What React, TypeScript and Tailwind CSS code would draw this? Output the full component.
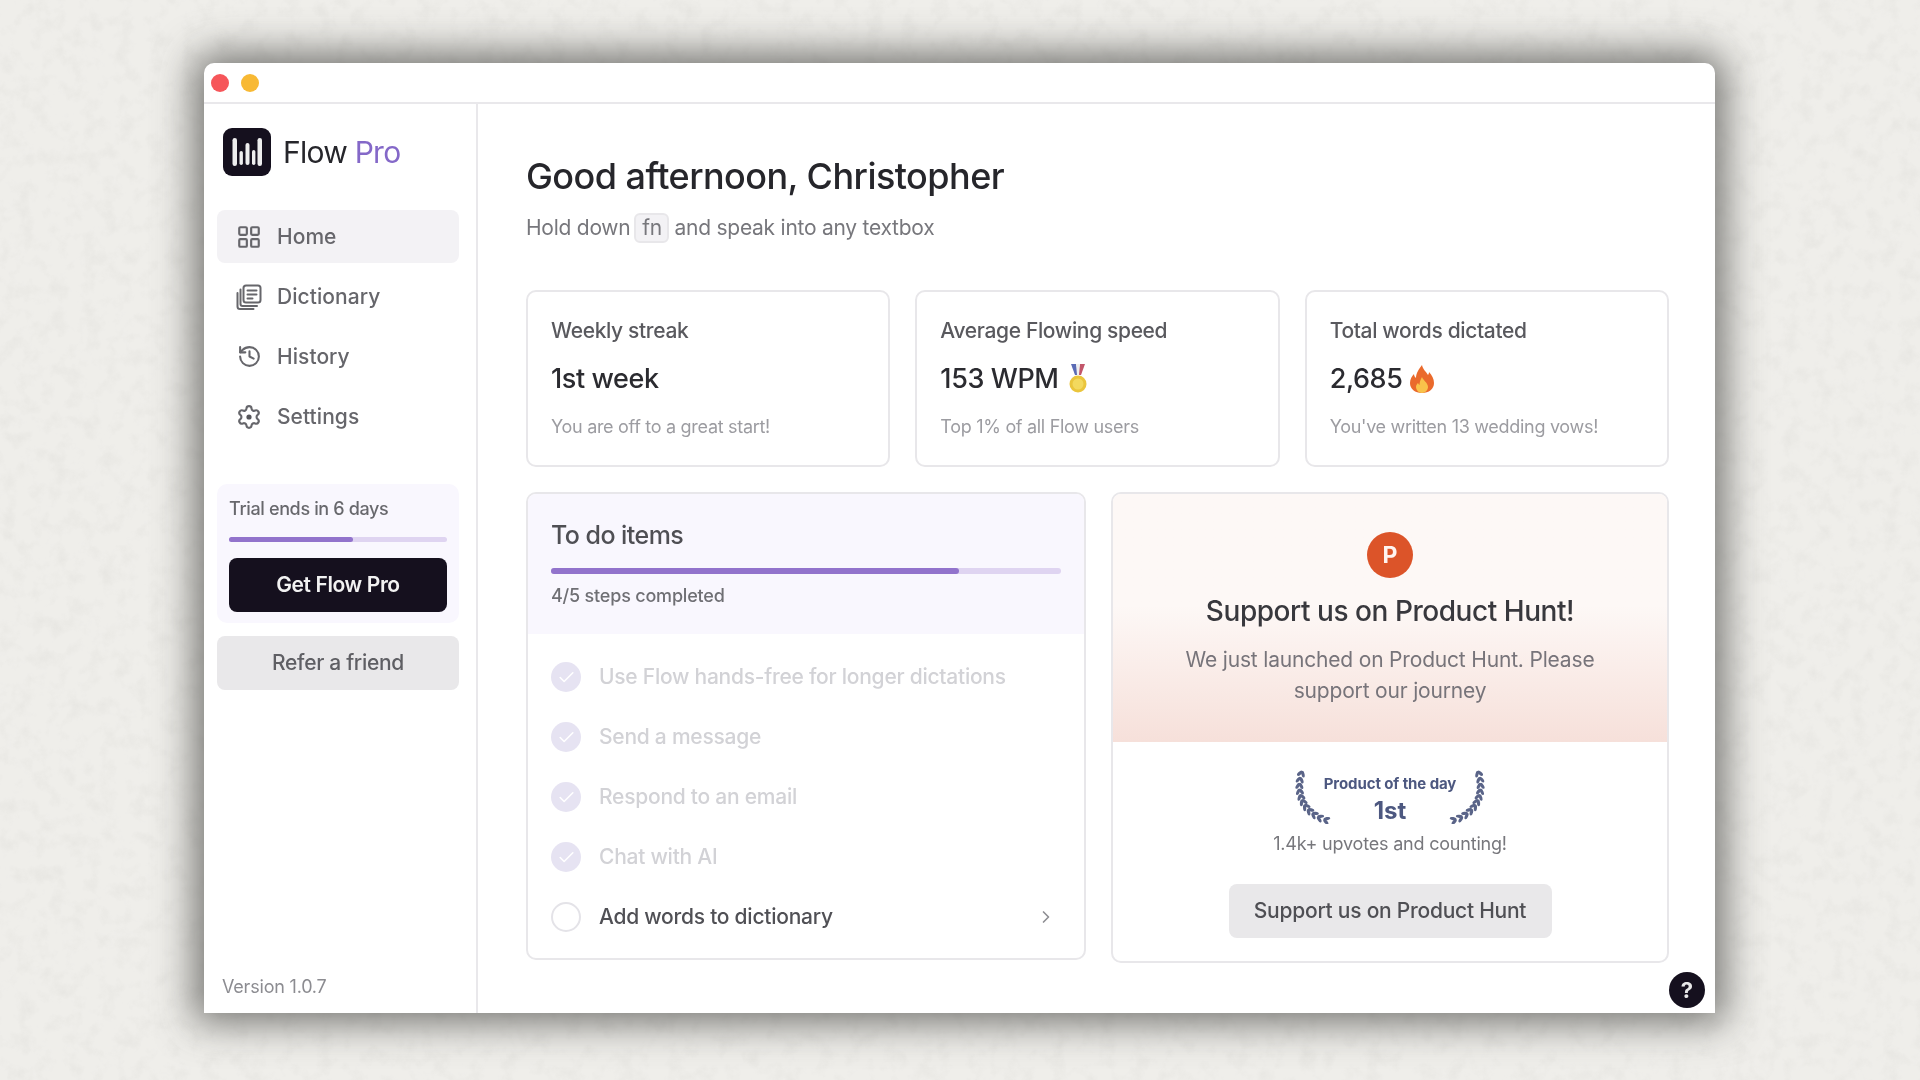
import React from "react";
import { ChevronRight, Check, LayoutGrid, History } from "lucide-react";

const font = "[font-family:Inter,'Liberation_Sans',sans-serif]";

function Logo() {
  return (
    <svg width="48" height="48" viewBox="0 0 48 48">
      <rect width="48" height="48" rx="9" fill="#15101e" />
      <rect x="9.5" y="10" width="4.5" height="28" rx="2.2" fill="#eeeeee" />
      <rect x="16.5" y="23" width="3.4" height="14" rx="1.7" fill="#eeeeee" />
      <rect x="22.5" y="15" width="4" height="22" rx="2" fill="#eeeeee" />
      <rect x="29" y="22" width="3.4" height="15" rx="1.7" fill="#eeeeee" />
      <rect x="34.5" y="10" width="4.5" height="28" rx="2.2" fill="#eeeeee" />
    </svg>
  );
}

function DictionaryIcon() {
  return (
    <svg width="26" height="26" viewBox="0 0 26 26" fill="none" stroke="#66666b" strokeWidth="2" strokeLinecap="round" strokeLinejoin="round">
      <rect x="7.5" y="1.5" width="17" height="17" rx="2.5" />
      <path d="M11.5 6.5h9M11.5 10.5h9M11.5 14.5h5" />
      <path d="M4.5 5.5v14.5a2 2 0 0 0 2 2h14.5" />
      <path d="M1.5 9v13.5a2.5 2.5 0 0 0 2.5 2.5h13.5" />
    </svg>
  );
}

function SettingsIcon() {
  return (
    <svg width="26" height="26" viewBox="0 0 24 24" fill="none" stroke="#66666b" strokeWidth="2" strokeLinecap="round" strokeLinejoin="round">
      <path d="M9.671 4.136a2.34 2.34 0 0 1 4.659 0 2.34 2.34 0 0 0 3.319 1.915 2.34 2.34 0 0 1 2.33 4.033 2.34 2.34 0 0 0 0 3.831 2.34 2.34 0 0 1-2.33 4.033 2.34 2.34 0 0 0-3.319 1.915 2.34 2.34 0 0 1-4.659 0 2.34 2.34 0 0 0-3.32-1.915 2.34 2.34 0 0 1-2.33-4.033 2.34 2.34 0 0 0 0-3.831A2.34 2.34 0 0 1 6.35 6.051a2.34 2.34 0 0 0 3.319-1.915" />
      <circle cx="12" cy="12" r="2.4" fill="#55555a" stroke="none" />
    </svg>
  );
}

function NavItem({ icon, label, active }: { icon: React.ReactNode; label: string; active?: boolean }) {
  return (
    <div className={`flex h-[53px] items-center rounded-lg pl-[19px] ${active ? "bg-[#f3f2f5]" : ""}`}>
      <span className="flex w-[26px] items-center justify-center">{icon}</span>
      <span className="ml-[15px] text-[21px] font-medium tracking-[0.05px] text-[#66666b]">{label}</span>
    </div>
  );
}

function Medal() {
  return (
    <svg width="20" height="30" viewBox="0 0 20 30" className="ml-[9px]">
      <path d="M3 0h5l3 11H7z" fill="#5b6bb5" />
      <path d="M12 0h5l-4 11H9z" fill="#c2566a" />
      <path d="M8 0h4l-1 11H9z" fill="#eeeeee" />
      <circle cx="10" cy="20" r="8.5" fill="#eac53c" />
      <circle cx="10" cy="20" r="5.5" fill="#f3d95e" />
    </svg>
  );
}

function Fire() {
  return (
    <svg width="24" height="28" viewBox="0 0 24 28" className="ml-[8px]">
      <path d="M12 0c1 5 4 6 6 10 .8-1 1-2 1-3 3 3 5 7 5 11 0 6-5 10-12 10S0 24 0 18c0-4 2-7 4-9 0 2 1 3 2 4 0-5 3-9 6-13z" fill="#ea6a2c" />
      <path d="M12 12c1 3 6 6 6 10 0 3-3 6-6 6s-6-3-6-6c0-2 1-3 2-4 .4 1 1 1.500 1.500 2 0-3 1-5 2.500-8z" fill="#f9c24a" />
    </svg>
  );
}

function StatCard({ title, value, note, extra }: { title: string; value: string; note: string; extra?: React.ReactNode }) {
  return (
    <div className="flex h-[177px] flex-1 flex-col rounded-[10px] border-2 border-[#e8e7ea] px-[23px] pt-[24px]">
      <div className="h-[30px] text-[21px] font-medium leading-[30px] tracking-[-0.35px] text-[#59595e]">{title}</div>
      <div className="mt-[16px] flex h-[34px] items-center text-[27px] font-medium leading-[34px] tracking-[-0.4px] text-[#2b2b30]">
        {value}
        {extra}
      </div>
      <div className="mt-[18px] h-[26px] text-[18px] leading-[26px] tracking-[-0.3px] text-[#9c9ca1]">{note}</div>
    </div>
  );
}

function TodoRow({ label, done }: { label: string; done?: boolean }) {
  return (
    <div className="flex h-[60px] items-center">
      {done ? (
        <span className="flex h-[30px] w-[30px] items-center justify-center rounded-full bg-[#e6e3f2]">
          <Check size={19} color="#ffffff" strokeWidth={2} />
        </span>
      ) : (
        <span className="h-[30px] w-[30px] rounded-full border-2 border-[#e4e3e8]" />
      )}
      <span className={`ml-[18px] text-[21px] font-medium tracking-[-0.25px] ${done ? "text-[#d2d2d6]" : "text-[#505055]"}`}>{label}</span>
      {!done && <ChevronRight size={20} color="#8e8e93" className="ml-auto mr-[5px]" />}
    </div>
  );
}

function bez(t: number) {
  const u = 1 - t;
  const p: [number, number][] = [[8, 1], [-1, 24], [7, 46], [34, 53]];
  const x = u * u * u * p[0][0] + 3 * u * u * t * p[1][0] + 3 * u * t * t * p[2][0] + t * t * t * p[3][0];
  const y = u * u * u * p[0][1] + 3 * u * u * t * p[1][1] + 3 * u * t * t * p[2][1] + t * t * t * p[3][1];
  const dx = 3 * u * u * (p[1][0] - p[0][0]) + 6 * u * t * (p[2][0] - p[1][0]) + 3 * t * t * (p[3][0] - p[2][0]);
  const dy = 3 * u * u * (p[1][1] - p[0][1]) + 6 * u * t * (p[2][1] - p[1][1]) + 3 * t * t * (p[3][1] - p[2][1]);
  return { x, y, a: (Math.atan2(dy, dx) * 180) / Math.PI };
}

const stops = Array.from({ length: 11 }, (_, i) => bez(0.05 + i * 0.09));

function Laurel({ flip }: { flip?: boolean }) {
  return (
    <svg width="36" height="56" viewBox="0 0 36 56" className={`shrink-0 ${flip ? "-scale-x-100" : ""}`}>
      {stops.map((s, i) => (
        <g key={i} transform={`translate(${s.x} ${s.y}) rotate(${s.a})`} fill="#5a6488">
          <ellipse cx="2" cy="-0.800" rx="3.400" ry="1.600" transform="rotate(-30)" />
          <ellipse cx="2" cy="0.800" rx="3.400" ry="1.600" transform="rotate(30)" />
        </g>
      ))}
    </svg>
  );
}

export default function App() {
  return (
    <div className={`relative flex h-screen w-screen justify-center overflow-hidden bg-[#efeeea] pt-[63px] pr-[1px] blur-[0.4px] ${font}`}>
      <svg className="absolute inset-0 h-full w-full opacity-30" aria-hidden="true">
        <filter id="paper">
          <feTurbulence type="fractalNoise" baseFrequency="0.06" numOctaves="4" seed="4" />
          <feColorMatrix values="0 0 0 0 0.55  0 0 0 0 0.55  0 0 0 0 0.52  0 0 0 1.2 -0.55" />
        </filter>
        <rect width="100%" height="100%" filter="url(#paper)" />
      </svg>
      <div className="relative flex h-[950px] w-[1511px] flex-col rounded-t-[10px] bg-white shadow-[0_0_38px_10px_rgba(60,60,58,0.68)]">
        <div className="flex h-[41px] shrink-0 items-center gap-[12px] border-b-2 border-[#e9e8eb] pl-[7px] pt-[1px]">
          <span className="h-[18px] w-[18px] rounded-full bg-[#f6565a]" />
          <span className="h-[18px] w-[18px] rounded-full bg-[#f8b934]" />
        </div>
        <div className="flex min-h-0 flex-1">
          <aside className="flex w-[274px] shrink-0 flex-col border-r-2 border-[#e9e8eb] pt-[24px] pr-[17px] pl-[13px]">
            <div className="ml-[6px] flex h-[48px] items-center">
              <Logo />
              <span className="ml-[12px] text-[30px] font-normal tracking-[-0.75px] text-[#26262b]">
                Flow <span className="text-[#8468c8]">Pro</span>
              </span>
            </div>
            <nav className="mt-[34px] flex flex-col gap-[7px]">
              <NavItem active label="Home" icon={<LayoutGrid size={26} color="#66666b" strokeWidth={2} />} />
              <NavItem label="Dictionary" icon={<DictionaryIcon />} />
              <NavItem label="History" icon={<History size={25} color="#66666b" strokeWidth={2} />} />
              <NavItem label="Settings" icon={<SettingsIcon />} />
            </nav>
            <div className="mt-[41px] flex h-[139px] flex-col rounded-[10px] bg-[#f9f7fe] px-[12px] pt-[12px]">
              <div className="h-[26px] text-[18px] font-medium leading-[26px] tracking-[-0.35px] text-[#68686d]">Trial ends in 6 days</div>
              <div className="mt-[15px] h-[5px] w-full rounded-full bg-[#dfd4f1]">
                <div className="h-full w-[57%] rounded-full bg-[#9273cc]" />
              </div>
              <button className="mt-[16px] h-[54px] rounded-lg bg-[#15101e] text-[21px] font-semibold tracking-[-0.4px] text-[#f2f2f2]">Get Flow Pro</button>
            </div>
            <button className="mt-[13px] h-[54px] rounded-lg bg-[#e9e8ea] text-[21px] font-medium tracking-[-0.3px] text-[#5f5f64]">Refer a friend</button>
            <div className="mt-auto mb-[13px] ml-[5px] text-[18px] tracking-[-0.2px] text-[#8c8c91]">Version 1.0.7</div>
          </aside>
          <main className="relative min-w-0 flex-1 pt-[50px] pr-[46px] pl-[48px]">
            <h1 className="h-[44px] text-[36px] font-medium leading-[44px] tracking-[-0.55px] text-[#26262b]">Good afternoon, Christopher</h1>
            <div className="mt-[14px] flex h-[32px] items-center text-[21px] tracking-[-0.25px] text-[#77777c]">
              Hold down
              <span className="mr-[5px] ml-[4px] flex h-[30px] w-[35px] items-center justify-center rounded-md border-2 border-[#e8e7ea] bg-[#f3f2f5]">fn</span>
              and speak into any textbox
            </div>
            <div className="mt-[46px] flex gap-[25px]">
              <StatCard title="Weekly streak" value="1st week" note="You are off to a great start!" />
              <StatCard title="Average Flowing speed" value="153 WPM" note="Top 1% of all Flow users" extra={<Medal />} />
              <StatCard title="Total words dictated" value="2,685" note="You've written 13 wedding vows!" extra={<Fire />} />
            </div>
            <div className="mt-[25px] flex items-start gap-[25px]">
              <section className="h-[468px] w-[560px] overflow-hidden rounded-[10px] border-2 border-[#e8e7ea]">
                <div className="h-[140px] bg-[#f9f7fe] px-[23px] pt-[23px]">
                  <div className="h-[36px] text-[25px] font-medium leading-[36px] tracking-[-0.55px] text-[#4f4f54]">To do items</div>
                  <div className="mt-[15px] h-[6px] w-full rounded-full bg-[#dfd4f1]">
                    <div className="h-full w-[80%] rounded-full bg-[#9273cc]" />
                  </div>
                  <div className="mt-[8px] text-[18px] font-medium tracking-[-0.2px] text-[#6f6f74]">4/5 steps completed</div>
                </div>
                <div className="px-[23px] pt-[13px]">
                  <TodoRow done label="Use Flow hands-free for longer dictations" />
                  <TodoRow done label="Send a message" />
                  <TodoRow done label="Respond to an email" />
                  <TodoRow done label="Chat with AI" />
                  <TodoRow label="Add words to dictionary" />
                </div>
              </section>
              <section className="h-[471px] flex-1 overflow-hidden rounded-[10px] border-2 border-[#e8e7ea]">
                <div className="flex h-[248px] flex-col items-center bg-gradient-to-b from-[#fdf8f6] from-45% to-[#f6e0da] pt-[38px]">
                  <span className="flex h-[46px] w-[46px] items-center justify-center rounded-full bg-[#dc5429] text-[23px] font-bold text-[#fff4f0]">P</span>
                  <div className="mt-[15px] h-[36px] text-[28px] font-medium leading-[36px] tracking-[-0.45px] text-[#38383d]">Support us on Product Hunt!</div>
                  <div className="mt-[15px] w-[440px] text-center text-[21px] leading-[31px] tracking-[-0.18px] text-[#77747a]">
                    We just launched on Product Hunt. Please support our journey
                  </div>
                </div>
                <div className="flex flex-col items-center pt-[24px]">
                  <div className="flex h-[60px] items-center">
                    <Laurel />
                    <div className="flex w-[118px] flex-col items-center pt-[9px] whitespace-nowrap text-[#4d5880]">
                      <div className="text-[15px] font-bold leading-[18px] tracking-[-0.1px]">Product of the day</div>
                      <div className="mt-[3px] text-[24px] font-bold leading-[30px]">1st</div>
                    </div>
                    <Laurel flip />
                  </div>
                  <div className="mt-[5px] text-[18px] leading-[26px] tracking-[-0.2px] text-[#77777c]">1.4k+ upvotes and counting!</div>
                  <button className="mt-[27px] h-[54px] w-[323px] rounded-lg bg-[#e9e8ea] text-[21px] font-medium tracking-[-0.25px] text-[#4f4f54]">Support us on Product Hunt</button>
                </div>
              </section>
            </div>
            <span className="absolute right-[10px] bottom-[5px] flex h-[36px] w-[36px] items-center justify-center rounded-full bg-[#15101e] text-[22px] font-bold text-[#e8e8e8]">?</span>
          </main>
        </div>
      </div>
    </div>
  );
}
